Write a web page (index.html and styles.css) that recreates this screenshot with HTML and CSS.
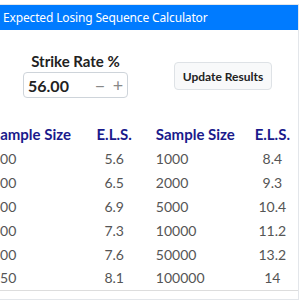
FILE: index.html
```html
<html>
  <head>
    <title>Expected Losing Sequence Calculator</title>
    <link rel="stylesheet" href="styles.css">
  </head>
  <body>
    <div id="calcCard">
      <div id="calcHeader">Expected Losing Sequence Calculator</div>
      <div id="controls">
        <div id="strikeBox">
          <label for="strikeRate">Strike Rate %</label>
          <div id="spinner">
            <span id="strikeRate">56.00</span>
            <span class="spinButton">&minus;</span>
            <span class="spinButton">+</span>
          </div>
        </div>
        <button id="updateButton">Update Results</button>
      </div>
      <table id="resultsTable">
        <thead>
          <tr>
            <th class="sizeCol">Sample Size</th>
            <th class="elsCol">E.L.S.</th>
            <th class="sizeCol second">Sample Size</th>
            <th class="elsCol">E.L.S.</th>
          </tr>
        </thead>
        <tbody>
          <tr><td class="sizeCol">100</td><td class="elsCol">5.6</td><td class="sizeCol second">1000</td><td class="elsCol">8.4</td></tr>
          <tr><td class="sizeCol">200</td><td class="elsCol">6.5</td><td class="sizeCol second">2000</td><td class="elsCol">9.3</td></tr>
          <tr><td class="sizeCol">300</td><td class="elsCol">6.9</td><td class="sizeCol second">5000</td><td class="elsCol">10.4</td></tr>
          <tr><td class="sizeCol">400</td><td class="elsCol">7.3</td><td class="sizeCol second">10000</td><td class="elsCol">11.2</td></tr>
          <tr><td class="sizeCol">500</td><td class="elsCol">7.6</td><td class="sizeCol second">50000</td><td class="elsCol">13.2</td></tr>
          <tr><td class="sizeCol">750</td><td class="elsCol">8.1</td><td class="sizeCol second">100000</td><td class="elsCol">14</td></tr>
        </tbody>
      </table>
    </div>
  </body>
</html>
```

FILE: styles.css
```css
body {
  margin: 0;
  overflow: hidden;
  font-family: Lato, sans-serif;
  background-color: white;
}

#calcCard {
  margin: 4px 1px 0 -8px;
  border: 1px solid #e3e6ea;
  border-left: none;
}

#calcHeader {
  background-color: #007bff;
  color: white;
  font-family: "Noto Sans", sans-serif;
  font-size: 12px;
  letter-spacing: -0.15px;
  height: 25px;
  line-height: 25px;
  padding-left: 11px;
}

#controls {
  display: flex;
  align-items: flex-start;
  padding: 22px 0 0 31px;
  height: 88px;
  box-sizing: border-box;
}

#strikeBox {
  display: flex;
  flex-direction: column;
  align-items: center;
  width: 105px;
}

#strikeBox label {
  font-weight: bold;
  font-size: 15px;
  color: #222;
  margin-bottom: 2px;
}

#spinner {
  display: flex;
  align-items: center;
  width: 105px;
  height: 26px;
  border: 1px solid #ced4da;
  border-radius: 4px;
  box-sizing: border-box;
  padding-left: 4px;
}

#strikeRate {
  font-weight: bold;
  font-size: 16px;
  color: #222;
  flex: 1;
}

.spinButton {
  color: #888;
  font-size: 18px;
  width: 18px;
  text-align: center;
}

#updateButton {
  margin: 10px 0 0 46px;
  padding: 0;
  width: 98px;
  height: 28px;
  background-color: #f8f9fa;
  border: 1px solid #dee2e6;
  border-radius: 4px;
  font-family: Lato, sans-serif;
  font-weight: bold;
  font-size: 12px;
  color: #222;
}

#resultsTable {
  border-collapse: collapse;
  width: 306px;
  margin-bottom: 8px;
}

#resultsTable th {
  color: #1a1a8c;
  font-size: 15px;
  font-weight: bold;
  height: 28px;
  padding: 4px 0 0;
}

#resultsTable td {
  color: #555;
  font-size: 14px;
  height: 24px;
  padding: 0;
}

.sizeCol {
  text-align: left;
  padding-left: 4px;
  width: 94px;
}

#resultsTable .second {
  padding-left: 16px;
  width: 88px;
}

.elsCol {
  text-align: center;
  width: 50px;
}

#resultsTable tbody tr:last-child td {
  border-bottom: 1px solid #ddd;
}
```
